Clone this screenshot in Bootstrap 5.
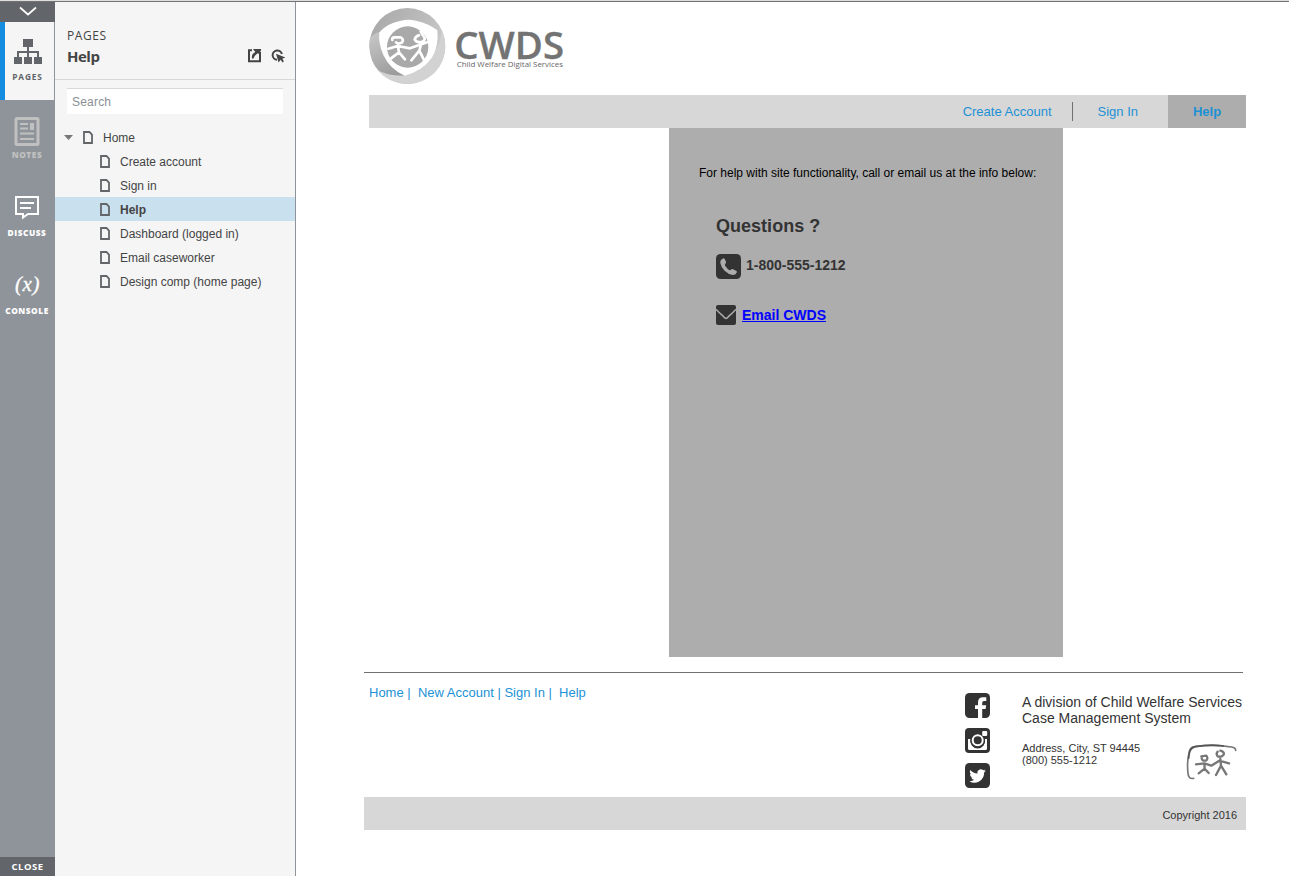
<!DOCTYPE html>
<html lang="en">
<head>
<meta charset="utf-8">
<meta name="viewport" content="width=device-width, initial-scale=1">
<title>Help</title>
<link href="https://cdn.jsdelivr.net/npm/bootstrap@5.3.0/dist/css/bootstrap.min.css" rel="stylesheet">
<style>
body{font-family:"Liberation Sans",Arial,sans-serif;font-size:12px;line-height:14px;color:#333;background:#fff;height:876px;overflow:hidden}
svg{display:block;flex:none}
.topline{height:2px;background:#dededc;border-bottom:1px solid #707274}
.shell{height:874px}
.rail{width:55px;background:#8f949a;font-family:"Open Sans",sans-serif;color:#fff;font-size:8.3px;font-weight:800;line-height:10px;letter-spacing:.55px}
.rail-end{height:20px;background:#626569}
.rail-close{height:19px;font-size:9.5px;font-weight:700;letter-spacing:.5px}
.rail-item{height:78px;padding:16px 1px 0 0}
.rail-item.current{background:#f5f5f5;color:#5f6368;border-left:5px solid #148de0;border-right:1px solid #8f949a;font-weight:700;letter-spacing:.9px;padding-right:4px}
.rail-item.muted{color:#c0c0c0}
.rail-icon{height:32px}
.rail-label{margin-top:2px}
.panel{width:241px;background:#f5f5f5;border-right:1px solid #8f949a;color:#444}
.panel-head{height:78px;padding:26px 9px 0 12px;border-bottom:1px solid #d8d8d8;font-family:"Open Sans",sans-serif}
.kicker{font-size:12px;font-weight:500;letter-spacing:.6px;line-height:16px}
.title{font-size:15px;line-height:24px;font-weight:700;letter-spacing:-.5px}
.find{width:216px;height:26px;margin:8px 0 11px 12px;padding:0 5px;border:0;border-top:1px solid #d8d8d8;border-radius:0;background:#fff;font-size:12px;letter-spacing:.2px;color:#444}
.find::placeholder{color:#8b8f94;opacity:1}
.tree-row{height:24px;padding-left:45px}
.tree-row.chosen{background:#c9e0ef;font-weight:700}
.tree-row .tree-text{margin-left:10px;padding-top:1px}
.tree-root{padding-left:9px}
.site{width:993px}
.brand{padding:6px 0 0 73px;height:93px}
.site-nav{margin-left:73px;width:877px;height:33px;background:#d7d7d7;color:#1c91d5;font-size:13px}
.site-nav a,.foot-links a{color:inherit;text-decoration:none}
.nav-rule{width:1px;height:19px;background:#707070;margin-left:20px;margin-right:25px}
.nav-here{width:78px;height:33px;background:#adadad;font-weight:700;margin-left:30px}
.help-box{width:394px;height:529px;margin-left:373px;background:#adadad;padding:38px 0 0 30px}
.lead-line{color:#000;white-space:nowrap}
.contact{padding-left:17px;font-weight:700;font-size:14px}
.contact h2{font-size:18px;font-weight:700;line-height:20px;margin:36px 0 18px;letter-spacing:.02px}
.contact a{color:#00f}
.foot{margin:15px 0 0 68px;width:882px}
.foot-top{height:125px;width:879px;border-top:1px solid #707070;font-size:13px}
.foot-links{color:#1c91d5;padding:13px 0 0 5px;width:601px;white-space:pre}
.social{padding-top:20px;gap:10px;width:57px}
.org{font-size:14px;line-height:16px;padding-top:21px;white-space:nowrap}
.addr{font-size:11px;line-height:12px;padding-top:16px}
.copy{height:33px;background:#d7d7d7;font-size:11px;padding:3px 9px 0 0}
</style>
</head>
<body>
<div class="topline"></div>
<div class="shell d-flex">
  <nav class="rail d-flex flex-column text-center">
    <div class="rail-end d-flex justify-content-center"><svg width="18" height="16" viewBox="0 0 18 16" fill="none" stroke="#fff" stroke-width="1.7"><path d="M1 5.5l8 7 8-7"/></svg></div>
    <div class="rail-item current">
      <div class="rail-icon d-flex justify-content-center"><svg width="28" height="27" viewBox="0 0 28 27" fill="#626569"><path d="M9 1h10v8H9zM0 19h8v7H0zM10 19h8v7h-8zM20 19h8v7h-8z"/><path d="M14 9v10M4 19v-5h20v5" stroke="#626569" stroke-width="2" fill="none"/></svg></div>
      <div class="rail-label">PAGES</div>
    </div>
    <div class="rail-item muted">
      <div class="rail-icon d-flex justify-content-center"><svg width="26" height="31" viewBox="0 0 26 31"><rect x="2" y="2.5" width="22" height="26" rx="1" fill="none" stroke="#c0c0c0" stroke-width="3"/><path d="M6 8h8M6 12.5h8M6 17.500h14M6 23h14" stroke="#c0c0c0" stroke-width="2"/><path fill="#c0c0c0" d="M16 7h4v7h-4z"/></svg></div>
      <div class="rail-label">NOTES</div>
    </div>
    <div class="rail-item">
      <div class="rail-icon d-flex justify-content-center"><svg width="26" height="26" viewBox="0 0 26 26"><path d="M2 3h22v17H14l-5 3.5V20H2z" fill="none" stroke="#fff" stroke-width="2"/><path d="M6 9h14M6 14h11" stroke="#fff" stroke-width="2"/></svg></div>
      <div class="rail-label">DISCUSS</div>
    </div>
    <div class="rail-item">
      <div class="rail-icon d-flex justify-content-center"><svg width="28" height="28" viewBox="0 0 28 28"><text x="2" y="19" textLength="25" fill="#fff" font-family="Liberation Serif, serif" font-style="italic" font-weight="400" font-size="21" stroke="#fff" stroke-width=".3">(x)</text></svg></div>
      <div class="rail-label">CONSOLE</div>
    </div>
    <div class="rail-end rail-close mt-auto d-flex align-items-center justify-content-center">CLOSE</div>
  </nav>
  <aside class="panel">
    <div class="panel-head">
      <div class="kicker">PAGES</div>
      <div class="d-flex justify-content-between">
        <div class="title">Help</div>
        <div class="d-flex" style="gap:9px;padding-top:5px">
          <svg width="15" height="14" viewBox="0 0 15 14"><path d="M5 1.200H2v11h11V3" fill="none" stroke="#444" stroke-width="2"/><path d="M6 0h8v1.200l-1.800 3.800L10.700 4.200C8.500 5.800 7.200 7.400 6.600 9.500H5c-.6-3 .7-5.200 3.300-6.500z" fill="#444"/></svg>
          <svg width="15" height="15" viewBox="0 0 15 15"><path d="M6 10.8A4.7 4.7 0 1 1 10.9 5" fill="none" stroke="#444" stroke-width="2"/><path d="M5 4.800l9.300 3.600-3 1.300 1.600 2.600-1.300 1.100-2-2.700-2 2.700z" fill="#444"/></svg>
        </div>
      </div>
    </div>
    <input class="find d-block" placeholder="Search" aria-label="Search">
    <div class="tree-row tree-root d-flex align-items-center">
      <svg width="9" height="5" viewBox="0 0 9 5"><path d="M0 0h9L4.500 5z" fill="#777"/></svg>
      <svg style="margin-left:10px" width="10" height="13" viewBox="0 0 10 13"><path d="M1 1h5.500L9 3.500V12H1z" fill="none" stroke="#626569" stroke-width="1.8"/></svg>
      <span class="tree-text">Home</span>
    </div>
    <div class="tree-row d-flex align-items-center"><svg width="10" height="13" viewBox="0 0 10 13"><path d="M1 1h5.500L9 3.500V12H1z" fill="none" stroke="#626569" stroke-width="1.8"/></svg><span class="tree-text">Create account</span></div>
    <div class="tree-row d-flex align-items-center"><svg width="10" height="13" viewBox="0 0 10 13"><path d="M1 1h5.500L9 3.500V12H1z" fill="none" stroke="#626569" stroke-width="1.8"/></svg><span class="tree-text">Sign in</span></div>
    <div class="tree-row chosen d-flex align-items-center"><svg width="10" height="13" viewBox="0 0 10 13"><path d="M1 1h5.500L9 3.500V12H1z" fill="none" stroke="#626569" stroke-width="1.8"/></svg><span class="tree-text">Help</span></div>
    <div class="tree-row d-flex align-items-center"><svg width="10" height="13" viewBox="0 0 10 13"><path d="M1 1h5.500L9 3.500V12H1z" fill="none" stroke="#626569" stroke-width="1.8"/></svg><span class="tree-text">Dashboard (logged in)</span></div>
    <div class="tree-row d-flex align-items-center"><svg width="10" height="13" viewBox="0 0 10 13"><path d="M1 1h5.500L9 3.500V12H1z" fill="none" stroke="#626569" stroke-width="1.8"/></svg><span class="tree-text">Email caseworker</span></div>
    <div class="tree-row d-flex align-items-center"><svg width="10" height="13" viewBox="0 0 10 13"><path d="M1 1h5.500L9 3.500V12H1z" fill="none" stroke="#626569" stroke-width="1.8"/></svg><span class="tree-text">Design comp (home page)</span></div>
  </aside>
  <main class="site">
    <div class="brand">
      <svg width="195" height="76" viewBox="27 24 585 228">
        <defs>
          <linearGradient id="ring" x1="0" y1=".2" x2="1" y2=".7"><stop offset="0" stop-color="#a9a9a9"/><stop offset=".6" stop-color="#bdbdbd"/><stop offset="1" stop-color="#d0d0d0"/></linearGradient>
          <linearGradient id="fold" x1=".2" y1="0" x2=".6" y2="1"><stop offset="0" stop-color="#c6c6c6"/><stop offset="1" stop-color="#9c9c9c"/></linearGradient>
        </defs>
        <circle cx="142" cy="138" r="114" fill="url(#ring)"/>
        <path d="M50 206Q90 229 135 226L196 185Q245 145 244 88Q270 150 238 200Q203 250 142 252Q83 249 50 206Z" fill="#d2d2d2"/>
        <path d="M29 120Q26 185 58 213Q95 230 135 226L60 97Q36 100 29 120Z" fill="url(#fold)"/>
        <path d="M58 97Q80 70 123 62Q145 57 168 62Q210 72 232 91Q237 140 215 174Q188 212 134 227Q90 208 70 165Q54 130 58 97Z" fill="#fff"/>
        <circle cx="143" cy="141" r="62" fill="#a9a9a9"/>
        <g fill="none" stroke="#fff" stroke-width="8" stroke-linecap="round" stroke-linejoin="round">
          <path d="M97 120Q95 112 104 112L122 112Q133 118 126 127Q115 134 108 127M85 146L113 138L150 145L201 127M114 139L117 157L92 176M117 157L135 178M177 106Q167 108 164 118Q170 130 186 125Q200 120 190 108L182 95M183 134L178 152L154 181M178 152L193 182"/>
        </g>
        <text x="283" y="176" textLength="329" lengthAdjust="spacingAndGlyphs" font-family="Open Sans, sans-serif" font-size="114" font-weight="600" fill="#737373" stroke="#737373" stroke-width="1">CWDS</text>
        <text x="290" y="202" textLength="319" lengthAdjust="spacingAndGlyphs" font-family="Open Sans, sans-serif" font-size="22" fill="#686868">Child Welfare Digital Services</text>
      </svg>
    </div>
    <nav class="site-nav d-flex align-items-center justify-content-end">
      <a href="#">Create Account</a><span class="nav-rule"></span><a href="#">Sign In</a>
      <a href="#" class="nav-here d-flex align-items-center justify-content-center">Help</a>
    </nav>
    <section class="help-box">
      <div class="lead-line">For help with site functionality, call or email us at the info below:</div>
      <div class="contact">
        <h2>Questions ?</h2>
        <div class="d-flex" style="gap:5px">
          <svg width="25" height="25" viewBox="0 0 25 25"><rect width="25" height="25" rx="4.500" fill="#333"/><path d="M5 6L7 4.400Q8.200 4 8.800 5.200L10.100 8.100Q10.200 9.100 9 10.200Q8.600 11 9.500 12.300Q11.300 15 13.500 16.200Q14.400 16.500 15.200 15.500Q16 14.700 17 15.200L20.500 16.900Q21.200 17.500 20.600 18.700Q19.500 21 16.900 21Q12.800 20.700 8.600 16.700Q4.700 12.500 4.300 8.700Q4.200 7.200 5 6Z" fill="#adadad"/></svg>
          <span style="padding-top:4px">1-800-555-1212</span>
        </div>
        <div class="d-flex" style="gap:6px;margin-top:26px">
          <svg width="20" height="20" viewBox="0 0 20 20"><rect width="20" height="20" rx="2" fill="#333"/><path d="M0 3.400Q3 7 6.300 9.500Q9 12.800 10 12.800Q11 12.800 13.700 9.500Q17 7 20 3.400" transform="translate(0 .8)" fill="none" stroke="#adadad" stroke-width="1.500"/></svg>
          <a href="#" style="padding-top:3px">Email CWDS</a>
        </div>
      </div>
    </section>
    <footer class="foot">
      <div class="foot-top d-flex">
        <div class="foot-links"><a href="#">Home</a> |  <a href="#">New Account</a> | <a href="#">Sign In</a> |  <a href="#">Help</a></div>
        <div class="social d-flex flex-column">
          <svg width="25" height="25" viewBox="0 0 25 25"><rect width="25" height="25" rx="4.500" fill="#333"/><path d="M13 25v-9h-3v-3.700h3V9.500Q13 4.200 18 4.200H21.300V8H19Q17.200 8 17.200 10v2.300h4l-.6 3.700h-3.400v9z" fill="#fff"/></svg>
          <svg width="25" height="25" viewBox="0 0 25 25"><rect width="25" height="25" rx="4" fill="#333"/><path d="M3 11v9.500q0 1.500 1.500 1.500h16q1.500 0 1.500-1.500V11h-2.200A7.400 7.400 0 1 1 5.600 11z" fill="#fff"/><circle cx="12.700" cy="12.600" r="7.400" fill="#333"/><circle cx="12.700" cy="12.300" r="5" fill="#333" stroke="#fff" stroke-width="2"/><rect x="17.200" y="3" width="5" height="5" rx="1" fill="#fff"/></svg>
          <svg width="25" height="25" viewBox="0 0 25 25"><rect width="25" height="25" rx="4.500" fill="#333"/><path transform="translate(4.300 4.200) scale(1.030)" d="M5.026 15c6.038 0 9.341-5.003 9.341-9.334q.002-.211-.006-.422A6.700 6.700 0 0 0 16 3.542a6.700 6.700 0 0 1-1.889.518 3.300 3.300 0 0 0 1.447-1.817 6.500 6.500 0 0 1-2.087.793A3.286 3.286 0 0 0 7.875 6.030a9.320 9.320 0 0 1-6.767-3.429 3.290 3.290 0 0 0 1.018 4.382A3.300 3.300 0 0 1 .640 6.575v.045a3.290 3.290 0 0 0 2.632 3.218 3.200 3.200 0 0 1-.865.115 3 3 0 0 1-.614-.057 3.280 3.280 0 0 0 3.067 2.277A6.600 6.600 0 0 1 .780 13.580a6 6 0 0 1-.780-.045A9.340 9.340 0 0 0 5.026 15" fill="#fff"/></svg>
        </div>
        <div class="org">
          A division of Child Welfare Services<br>Case Management System
          <div class="d-flex">
            <div class="addr">Address, City, ST 94445<br>(800) 555-1212</div>
            <svg style="margin:18px 0 0 46px" width="52" height="38" viewBox="708 192 156 114" fill="none" stroke-linecap="round" stroke-linejoin="round">
              <path d="M731 295Q715 298 714 280Q710 245 718 214Q721 201 735 200Q785 191 835 200Q858 201 857 211" stroke="#777" stroke-width="5"/>
              <path d="M716 235Q717 204 735 200Q785 193 820 198" stroke="#555" stroke-width="5"/>
              <g stroke="#777" stroke-width="7"><path d="M754 229L769 227Q776 237 767 242Q755 243 755 234M738 253L763 250L784 257L808 242L837 250M763 251L764 266L746 280M764 266L776 279M803 215Q797 221 803 229Q815 233 821 224Q824 215 811 212M811 237L813 257L798 285M813 257L829 283"/></g>
            </svg>
          </div>
        </div>
      </div>
      <div class="copy d-flex align-items-center justify-content-end">Copyright 2016</div>
    </footer>
  </main>
</div>
<script src="https://cdn.jsdelivr.net/npm/bootstrap@5.3.0/dist/js/bootstrap.bundle.min.js"></script>
</body>
</html>
